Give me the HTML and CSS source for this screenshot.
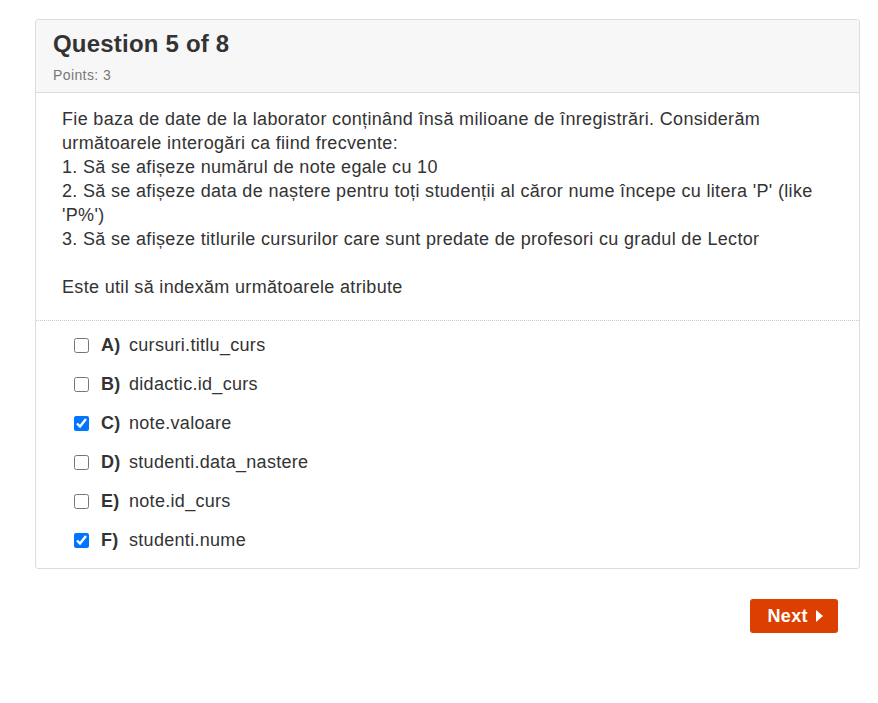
FILE: index.html
```html
<!DOCTYPE html>
<html lang="ro">
<head>
<meta charset="utf-8">
<link rel="stylesheet" href="styles.css">
</head>
<body>
<div class="page">
  <div class="card">
    <div class="card-header">
      <h2 class="title">Question 5 of 8</h2>
      <div class="points">Points: 3</div>
    </div>
    <div class="question">
      Fie baza de date de la laborator conținând însă milioane de înregistrări. Considerăm următoarele interogări ca fiind frecvente:<br>
      1. Să se afișeze numărul de note egale cu 10<br>
      2. Să se afișeze data de naștere pentru toți studenții al căror nume începe cu litera 'P' (like 'P%')<br>
      3. Să se afișeze titlurile cursurilor care sunt predate de profesori cu gradul de Lector<br>
      <br>
      Este util să indexăm următoarele atribute
    </div>
    <div class="options">
      <label class="option"><input type="checkbox"><span class="letter">A)</span><span class="text">cursuri.titlu_curs</span></label>
      <label class="option"><input type="checkbox"><span class="letter">B)</span><span class="text">didactic.id_curs</span></label>
      <label class="option"><input type="checkbox" checked><span class="letter">C)</span><span class="text">note.valoare</span></label>
      <label class="option"><input type="checkbox"><span class="letter">D)</span><span class="text">studenti.data_nastere</span></label>
      <label class="option"><input type="checkbox"><span class="letter">E)</span><span class="text">note.id_curs</span></label>
      <label class="option"><input type="checkbox" checked><span class="letter">F)</span><span class="text">studenti.nume</span></label>
    </div>
  </div>
  <div class="actions">
    <button class="next">Next <svg class="arrow" width="7" height="12" viewBox="0 0 7 12"><path d="M0 0 L7 6 L0 12 Z" fill="#fff"/></svg></button>
  </div>
</div>
</body>
</html>
```
FILE: styles.css
```css
html, body {
  margin: 0;
  padding: 0;
  background: #fff;
}
body {
  font-family: "Liberation Sans", Arial, sans-serif;
  color: #333;
}
.page {
  padding: 19px 0 0 35px;
  width: 825px;
}
.card {
  border: 1px solid #ddd;
  border-radius: 3px;
  background: #fff;
}
.card-header {
  background: #f7f7f7;
  border-bottom: 1px solid #ddd;
  padding: 10px 17px 8px;
  border-radius: 3px 3px 0 0;
}
.title {
  margin: 0;
  font-size: 24px;
  line-height: 28px;
  font-weight: bold;
  letter-spacing: 0.2px;
  color: #333;
}
.points {
  margin-top: 8px;
  font-size: 14px;
  line-height: 18px;
  letter-spacing: 0.4px;
  color: #777;
}
.question {
  padding: 14px 26px 21px;
  font-size: 18px;
  line-height: 24px;
  letter-spacing: 0.33px;
  border-bottom: 1px dotted #ccc;
}
.options {
  padding: 5px 0 8px 38px;
}
.option {
  display: flex;
  align-items: center;
  height: 39px;
  font-size: 18px;
  letter-spacing: 0.3px;
}
.option input {
  margin: 0;
  width: 15px;
  height: 15px;
}
.letter {
  font-weight: bold;
  margin-left: 12px;
  width: 28px;
}
.actions {
  display: flex;
  justify-content: flex-end;
  padding: 30px 22px 0 0;
}
.next {
  display: flex;
  align-items: center;
  gap: 8px;
  height: 34px;
  padding: 0 15px 0 17px;
  background: #dd3f00;
  border: none;
  border-radius: 3px;
  color: #fff;
  font-family: "Liberation Sans", Arial, sans-serif;
  font-weight: bold;
  font-size: 18px;
  letter-spacing: 0.4px;
}
```
